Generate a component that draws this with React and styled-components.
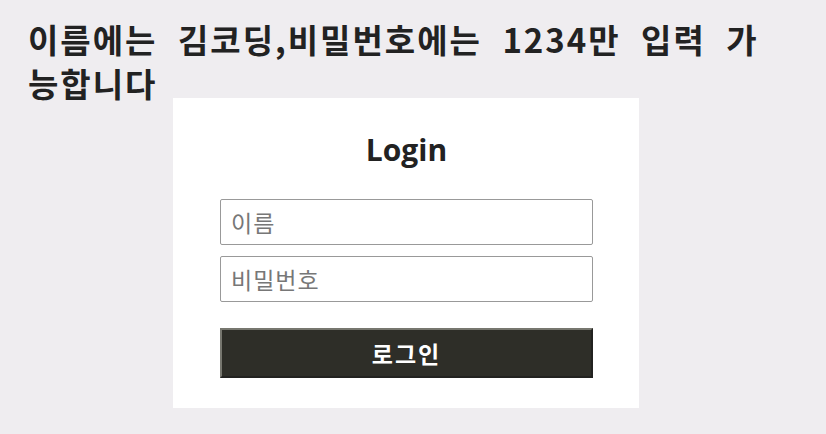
import React, { useState } from "react";
import styled, { createGlobalStyle } from "styled-components";

const GlobalStyle = createGlobalStyle`
  body {
    margin: 0;
    background-color: #efedf0;
    font-family: "Noto Sans CJK KR", "Noto Sans", sans-serif;
  }
`;

const Page = styled.div`
  width: 100%;
  min-height: 434px;
  padding: 17px 0 0 28px;
  box-sizing: border-box;
`;

const Notice = styled.h1`
  margin: 0 0 -7px;
  max-width: 745px;
  font-size: 33px;
  font-weight: 700;
  line-height: 44px;
  letter-spacing: 2px;
  word-spacing: 11px;
  color: #222;
`;

const Wrapper = styled.div`
  position: relative;
  width: 466px;
  margin-left: 145px;
  padding: 32px 46px 30px 47px;
  box-sizing: border-box;
  background-color: white;
`;

const Title = styled.h2`
  margin: 0 0 29px;
  text-align: center;
  font-family: "Open Sans", "Noto Sans", sans-serif;
  font-size: 30px;
  font-weight: 700;
  line-height: 40px;
  color: #222;
`;

const Form = styled.form`
  display: flex;
  flex-direction: column;
`;

const Input = styled.input`
  height: 46px;
  margin-bottom: 11px;
  padding: 0 10px;
  box-sizing: border-box;
  border: 1px solid #999;
  border-radius: 2px;
  font-family: "Noto Sans CJK KR", sans-serif;
  font-size: 23px;
  letter-spacing: 1px;
  color: #222;
  outline: none;

  &::placeholder {
    color: #777;
  }
`;

const Button = styled.button`
  height: 50px;
  margin-top: 15px;
  border: 2px outset #77776f;
  background-color: #2e2e28;
  color: white;
  font-family: "Noto Sans CJK KR", sans-serif;
  font-size: 23px;
  font-weight: 700;
  letter-spacing: 2px;
  cursor: pointer;
`;

const App = () => {
  const [loginInput, setLogin] = useState({ username: "", password: "" });

  const handleInput = (e) => {
    setLogin({ ...loginInput, [e.target.name]: e.target.value });
  };

  const loginSubmit = (e) => {
    e.preventDefault();
  };

  return (
    <Page>
      <GlobalStyle />
      <Notice>이름에는 김코딩,비밀번호에는 1234만 입력 가능합니다</Notice>
      <Wrapper>
        <Title>Login</Title>
        <Form onSubmit={loginSubmit}>
          <Input
            name="username"
            placeholder="이름"
            onChange={handleInput}
            value={loginInput.username}
          />
          <Input
            name="password"
            type="password"
            placeholder="비밀번호"
            onChange={handleInput}
            value={loginInput.password}
          />
          <Button type="submit">로그인</Button>
        </Form>
      </Wrapper>
    </Page>
  );
};

export default App;
